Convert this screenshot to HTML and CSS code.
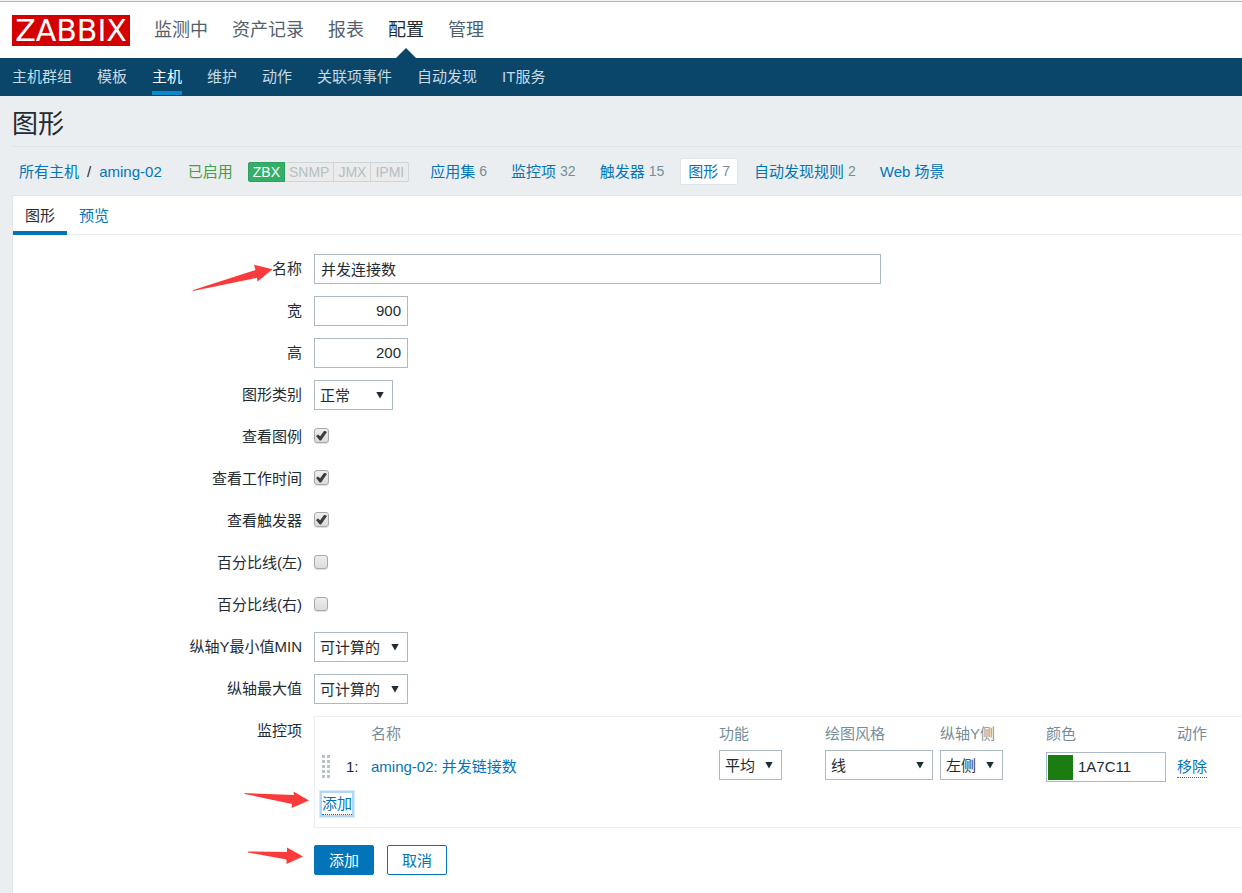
FILE: index.html
```html
<!DOCTYPE html>
<html lang="zh-CN">
<head>
<meta charset="utf-8">
<title>图形配置</title>
<link rel="stylesheet" href="styles.css">
</head>
<body>
<header class="top">
  <a class="logo" href="#">ZABBIX</a>
  <nav class="main-nav">
    <a href="#">监测中</a>
    <a href="#">资产记录</a>
    <a href="#">报表</a>
    <a href="#" class="current">配置</a>
    <a href="#">管理</a>
  </nav>
</header>
<nav class="sub-nav">
  <a href="#">主机群组</a>
  <a href="#">模板</a>
  <a href="#" class="current">主机</a>
  <a href="#">维护</a>
  <a href="#">动作</a>
  <a href="#">关联项事件</a>
  <a href="#">自动发现</a>
  <a href="#">IT服务</a>
</nav>
<main class="page">
  <h1 class="title">图形</h1>
  <div class="object-nav">
    <div class="crumbs"><a href="#">所有主机</a><span>/</span><a href="#">aming-02</a></div>
    <span class="enabled">已启用</span>
    <div class="badges"><span class="on">ZBX</span><span>SNMP</span><span>JMX</span><span>IPMI</span></div>
    <div class="links">
      <span class="link"><a href="#">应用集</a><sup>6</sup></span>
      <span class="link"><a href="#">监控项</a><sup>32</sup></span>
      <span class="link"><a href="#">触发器</a><sup>15</sup></span>
      <span class="link selected"><a href="#">图形</a><sup>7</sup></span>
      <span class="link"><a href="#">自动发现规则</a><sup>2</sup></span>
      <span class="link"><a href="#">Web 场景</a></span>
    </div>
  </div>
  <div class="panel">
    <div class="tabs">
      <a href="#" class="tab current">图形</a>
      <a href="#" class="tab">预览</a>
    </div>
    <form class="form">
      <div class="row">
        <label for="name">名称</label>
        <input class="text wide" id="name" type="text" value="并发连接数">
        <svg class="arrow arrow-name" width="82" height="28" viewBox="0 0 82 28" aria-hidden="true"><path d="M.5 26.3 63.500 6 62 .8 80.500 5.200 65.500 17.500 65 13.800 1 27z"/></svg>
      </div>
      <div class="row">
        <label for="width">宽</label>
        <input class="text number" id="width" type="text" value="900">
      </div>
      <div class="row">
        <label for="height">高</label>
        <input class="text number" id="height" type="text" value="200">
      </div>
      <div class="row">
        <label for="type">图形类别</label>
        <span class="select type"><select id="type"><option>正常</option></select></span>
      </div>
      <div class="row">
        <label for="legend">查看图例</label>
        <input class="check" id="legend" type="checkbox" checked>
      </div>
      <div class="row">
        <label for="worktime">查看工作时间</label>
        <input class="check" id="worktime" type="checkbox" checked>
      </div>
      <div class="row">
        <label for="triggers">查看触发器</label>
        <input class="check" id="triggers" type="checkbox" checked>
      </div>
      <div class="row">
        <label for="pleft">百分比线(左)</label>
        <input class="check" id="pleft" type="checkbox">
      </div>
      <div class="row">
        <label for="pright">百分比线(右)</label>
        <input class="check" id="pright" type="checkbox">
      </div>
      <div class="row">
        <label for="ymin">纵轴Y最小值MIN</label>
        <span class="select axis"><select id="ymin"><option>可计算的</option></select></span>
      </div>
      <div class="row">
        <label for="ymax">纵轴最大值</label>
        <span class="select axis"><select id="ymax"><option>可计算的</option></select></span>
      </div>
      <div class="row">
        <span class="label">监控项</span>
        <div class="items">
          <table>
            <colgroup><col class="c-drag"><col class="c-num"><col><col class="c-func"><col class="c-style"><col class="c-side"><col class="c-color"><col class="c-action"></colgroup>
            <thead>
              <tr><th></th><th></th><th>名称</th><th>功能</th><th>绘图风格</th><th>纵轴Y侧</th><th>颜色</th><th>动作</th></tr>
            </thead>
            <tbody>
              <tr>
                <td class="drag"><svg width="8" height="23" viewBox="0 0 8 23" fill="#b5c3ca" aria-hidden="true"><path d="M0 0h3v3H0zM5 0h3v3H5zM0 5h3v3H0zM5 5h3v3H5zM0 10h3v3H0zM5 10h3v3H5zM0 15h3v3H0zM5 15h3v3H5zM0 20h3v3H0zM5 20h3v3H5z"/></svg></td>
                <td>1:</td>
                <td><a href="#">aming-02: 并发链接数</a></td>
                <td class="control"><span class="select short"><select aria-label="功能"><option>平均</option></select></span></td>
                <td class="control"><span class="select line"><select aria-label="绘图风格"><option>线</option></select></span></td>
                <td class="control"><span class="select short"><select aria-label="纵轴Y侧"><option>左侧</option></select></span></td>
                <td class="control"><span class="color"><button type="button" class="swatch" aria-label="选择颜色"></button><input type="text" aria-label="颜色" value="1A7C11"></span></td>
                <td><button type="button" class="action">移除</button></td>
              </tr>
              <tr class="add">
                <td colspan="8"><button type="button" class="action focused">添加</button></td>
              </tr>
            </tbody>
          </table>
        </div>
        <svg class="arrow arrow-items" width="66" height="18" viewBox="0 0 66 18" aria-hidden="true"><path d="M0 2 50 4 49.500.500 65 9.500 47.500 17 48 13 1 3z"/></svg>
      </div>
      <div class="row buttons">
        <span></span>
        <div class="button-bar">
          <button type="submit" class="btn primary">添加</button>
          <button type="button" class="btn">取消</button>
        </div>
        <svg class="arrow arrow-submit" width="56" height="18" viewBox="0 0 56 18" aria-hidden="true"><path d="M0 4.500 39 5 39 .500 55 9.500 38.500 17 38.500 12.500 0 5.500z"/></svg>
      </div>
    </form>
  </div>
</main>
</body>
</html>
```
FILE: styles.css
```css
* { box-sizing: border-box; }

body {
  margin: 0;
  min-height: 100vh;
  display: flex;
  flex-direction: column;
  background: #ebeef0;
  color: #1f2c33;
  font: 15px/20px "Liberation Sans", "Noto Sans CJK SC", sans-serif;
}

a { color: #0275b8; text-decoration: none; }
input, select, button { font: inherit; color: inherit; }

/* Header */
.top {
  display: flex;
  align-items: center;
  gap: 24px;
  height: 58px;
  padding: 2px 12px 0;
  background: linear-gradient(#f2f2f2 1px, #b6b6b6 1px, #b6b6b6 2px, #fff 2px);
}
.logo {
  width: 118px;
  height: 31px;
  background: #d40000;
  color: #fff;
  font: 30px/31px "DejaVu Sans", sans-serif;
  text-align: center;
}
.main-nav { display: flex; gap: 24px; height: 100%; font-size: 18px; line-height: 56px; }
.main-nav a { position: relative; color: #52616b; }
.main-nav .current { color: #1f2c33; }
.main-nav .current::after {
  content: "";
  position: absolute;
  left: 50%;
  bottom: 0;
  margin-left: -10px;
  border: 10px solid transparent;
  border-top: 0;
  border-bottom-color: #0a466a;
}

.sub-nav {
  display: flex;
  gap: 25px;
  height: 38px;
  padding: 0 12px 1px;
  background: #0a466a;
  line-height: 37px;
}
.sub-nav a { color: #c8dae4; border-bottom: 4px solid transparent; }
.sub-nav .current { color: #fff; border-color: #0f87cd; }

/* Page heading */
.page { flex: 1; display: flex; flex-direction: column; padding-left: 12px; }
.title {
  margin: 0;
  height: 51px;
  border-bottom: 1px solid #dfe4e7;
  font-size: 26px;
  font-weight: 400;
  line-height: 56px;
}

.object-nav { display: flex; align-items: center; height: 48px; padding: 2px 0 0 7px; white-space: nowrap; }
.crumbs { display: flex; gap: 8px; }
.enabled { margin: 0 15px 0 26px; color: #429e47; }
.badges {
  display: flex;
  height: 20px;
  border: 1px solid #ccd5d9;
  border-radius: 2px;
  background: #ebebeb;
  color: #b3bfc5;
  font-size: 14px;
  line-height: 19px;
}
.badges span { padding: 0 4px; border-left: 1px solid #ccd5d9; }
.badges .on { margin: -1px 0 -1px -1px; border: 1px solid #2f9f5e; border-radius: 2px 0 0 2px; background: #34af67; color: #fff; }
.badges .on + span { border-left: 0; }
.links { display: flex; gap: 8px; margin: 0 0 2px 13px; }
.link { display: flex; gap: 4px; height: 27px; padding: 0 7px; border: 1px solid transparent; border-radius: 2px; line-height: 25px; }
.link.selected { background: #fff; border-color: #dfe4e7; }
.link sup { color: #768d99; font-size: 14px; line-height: inherit; vertical-align: baseline; }

/* Panel */
.panel { flex: 1; background: #fff; border: solid #dfe4e7; border-width: 1px 0 0 1px; padding-bottom: 16px; }
.tabs { display: flex; height: 39px; border-bottom: 1px solid #ebeef0; line-height: 40px; }
.tab { height: 39px; padding: 0 12px; }
.tab.current { color: #1f2c33; border-bottom: 4px solid #0275b8; }

/* Form */
.form { display: grid; gap: 12px; padding-top: 19px; }
.row { position: relative; display: grid; grid-template-columns: 289px 1fr; column-gap: 12px; align-items: start; min-height: 30px; }
.row > label, .label { text-align: right; line-height: 30px; }
.text { width: 94px; height: 30px; padding: 0 6px 2px; border: 1px solid #acbbc2; background: #fff; }
.wide { width: 567px; max-width: 100%; }
.number { text-align: right; }

.select { display: inline-grid; align-items: center; height: 30px; }
.select select {
  grid-area: 1 / 1;
  width: 100%;
  height: 30px;
  padding: 2px 20px 0 5px;
  border: 1px solid #acbbc2;
  border-radius: 0;
  background: #fff;
  appearance: none;
}
.select::after {
  content: "";
  grid-area: 1 / 1;
  justify-self: end;
  width: 8px;
  height: 7px;
  margin-right: 9px;
  background: #1f2c33;
  clip-path: polygon(0 0, 100% 0, 50% 100%);
  pointer-events: none;
}
.select.type { width: 79px; }
.select.axis { width: 94px; }
.select.short { width: 63px; }
.select.line { width: 108px; }

.check {
  display: grid;
  place-items: center;
  width: 14px;
  height: 14px;
  margin: 7px 0;
  border: 1px solid #a9a9a9;
  border-radius: 3px;
  background: linear-gradient(#ededed, #dcdcdc);
  box-shadow: 0 1px 1px #dedede;
  appearance: none;
}
.check:checked { width: 15px; height: 15px; margin: 6px 0; }
.check:checked::before {
  content: "";
  width: 11px;
  height: 10px;
  background: #3d3d3d;
  clip-path: polygon(0 55%, 18% 40%, 38% 58%, 76% 0, 100% 14%, 46% 100%, 34% 100%);
}

/* Items table */
.items { border: 1px solid #ebeef0; border-right: 0; }
.items table { width: 100%; border-collapse: collapse; table-layout: fixed; }
.items th, .items td { height: 33px; padding: 0; text-align: left; font-weight: 400; white-space: nowrap; }
.items th { color: #768d99; }
.items .drag { padding-left: 7px; }
.items .drag svg { display: block; }
.items .control { vertical-align: top; }
.items .control .select { display: grid; }
.items .add td { height: 44px; padding: 0 0 2px 7px; }
.c-drag { width: 31px; }
.c-num { width: 25px; }
.c-func, .c-side { width: 106px; }
.c-style { width: 115px; }
.c-color { width: 131px; }
.c-action { width: 65px; }

.color { display: flex; align-items: center; gap: 5px; width: 120px; height: 30px; margin-top: 2px; padding-left: 1px; border: 1px solid #acbbc2; }
.color input { flex: 1; min-width: 0; padding: 0; border: 0; background: none; }
.swatch { width: 25px; height: 25px; padding: 0; border: 0; background: #1a7c11; }

.action { padding: 0; border: 0; border-bottom: 1px dotted #0275b8; background: none; color: #0275b8; line-height: 21px; }
.focused { outline: 2px solid #b3d8f5; box-shadow: 0 0 0 3px #d9ebf9; }

.buttons { margin-top: 5px; }
.button-bar { display: flex; gap: 13px; }
.btn { min-width: 60px; height: 30px; padding: 1px 11px 0; border: 1px solid #0275b8; border-radius: 2px; background: #fff; color: #0275b8; }
.btn.primary { background: #0275b8; color: #fff; }

/* Callout arrows */
.arrow { position: absolute; fill: #fb3b3b; }
.arrow-name { left: 179px; top: 10px; }
.arrow-items { left: 231px; top: 75px; }
.arrow-submit { left: 235px; top: 2px; }
```
